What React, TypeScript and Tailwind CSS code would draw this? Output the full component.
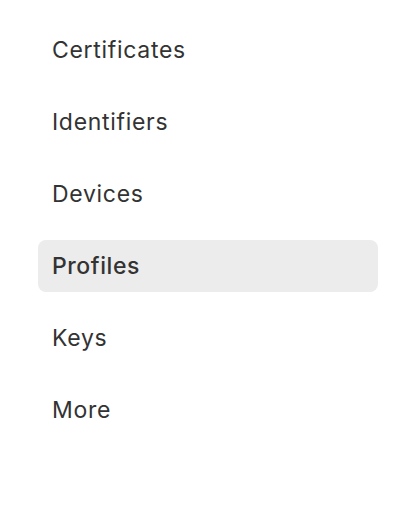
import React from "react";

const items = ["Certificates", "Identifiers", "Devices", "Profiles", "Keys", "More"];

export default function App() {
  return (
    <div className="w-[404px] h-[512px] bg-white pt-[24px] pl-[38px]" style={{ fontFamily: "Inter, 'Noto Sans', sans-serif" }}>
      <div className="flex flex-col gap-[20px] w-[340px]">
        {items.map((it) => (
          <div
            key={it}
            className={
              it === "Profiles"
                ? "h-[52px] flex items-center px-[14px] rounded-[8px] bg-[#ececec] text-[23px] tracking-[0.025em] font-medium text-[#333333]"
                : "h-[52px] flex items-center px-[14px] rounded-[8px] text-[23px] tracking-[0.03em] text-[#333333]"
            }
          >
            {it}
          </div>
        ))}
      </div>
    </div>
  );
}
